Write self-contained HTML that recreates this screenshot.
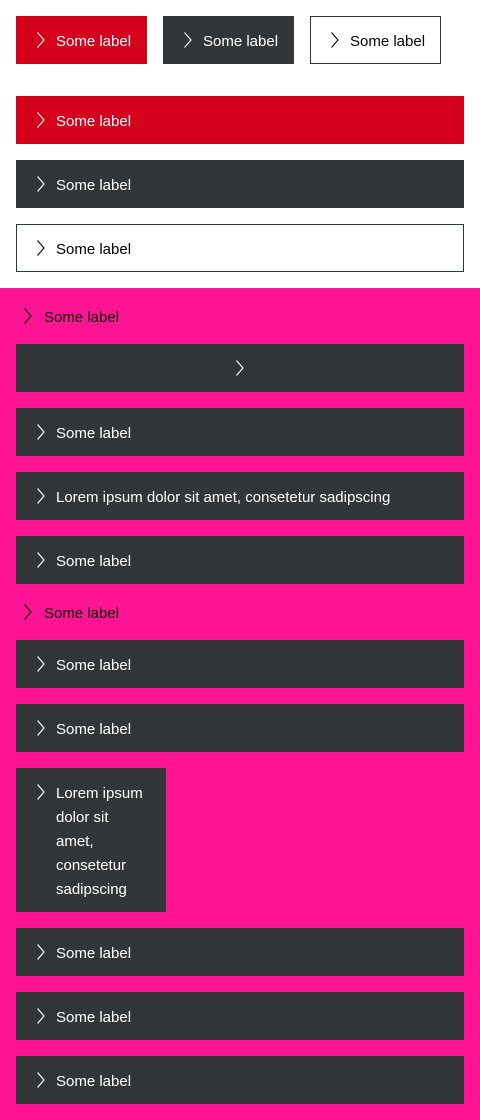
<!DOCTYPE html>
<html><head><style>
*{margin:0;padding:0;box-sizing:border-box}
body{width:480px;height:1120px;background:#fff;position:relative;font-family:"Liberation Sans",sans-serif;font-size:15px;overflow:hidden}
.b{position:absolute;height:48px;display:flex;align-items:center;padding-left:40px;padding-top:3px;color:#fff;line-height:24px}
.b svg{position:absolute;left:20px;top:16px}
.r{background:#d5001c}.d{background:#323639}.o{background:#fff;border:1px solid #323639;color:#000;padding-left:39px}
.o svg{left:19px;top:15px}
.pink{position:absolute;left:0;top:288px;width:480px;height:832px;background:#ff1493}
.l{position:absolute;left:23px;display:flex;align-items:center;color:#000;height:24px;padding-top:3px}
.l svg{margin-right:5px;margin-top:-3px}
</style></head><body>
<svg width="0" height="0" style="position:absolute"><defs><symbol id="c" viewBox="0 0 16 16"><path d="M1.5 0.5L8 8L1.5 15.5" fill="none" stroke="currentColor" stroke-width="1.1"/></symbol></defs></svg>
<div class="b r" style="left:16px;top:16px;width:131px"><svg width="16" height="16"><use href="#c"/></svg>Some label</div>
<div class="b d" style="left:163px;top:16px;width:131px"><svg width="16" height="16"><use href="#c"/></svg>Some label</div>
<div class="b o" style="left:310px;top:16px;width:131px"><svg width="16" height="16"><use href="#c"/></svg>Some label</div>
<div class="b r" style="left:16px;top:96px;width:448px"><svg width="16" height="16"><use href="#c"/></svg>Some label</div>
<div class="b d" style="left:16px;top:160px;width:448px"><svg width="16" height="16"><use href="#c"/></svg>Some label</div>
<div class="b o" style="left:16px;top:224px;width:448px"><svg width="16" height="16"><use href="#c"/></svg>Some label</div>
<div class="pink"></div>
<div class="l" style="top:304px"><svg width="16" height="16"><use href="#c"/></svg>Some label</div>
<div class="b d" style="left:16px;top:344px;width:448px"><svg width="16" height="16" style="left:219px"><use href="#c"/></svg></div>
<div class="b d" style="left:16px;top:408px;width:448px"><svg width="16" height="16"><use href="#c"/></svg>Some label</div>
<div class="b d" style="left:16px;top:472px;width:448px"><svg width="16" height="16"><use href="#c"/></svg>Lorem ipsum dolor sit amet, consetetur sadipscing</div>
<div class="b d" style="left:16px;top:536px;width:448px"><svg width="16" height="16"><use href="#c"/></svg>Some label</div>
<div class="l" style="top:600px"><svg width="16" height="16"><use href="#c"/></svg>Some label</div>
<div class="b d" style="left:16px;top:640px;width:448px"><svg width="16" height="16"><use href="#c"/></svg>Some label</div>
<div class="b d" style="left:16px;top:704px;width:448px"><svg width="16" height="16"><use href="#c"/></svg>Some label</div>
<div class="b d" style="left:16px;top:768px;width:150px;height:144px;align-items:flex-start;padding-top:14px"><svg width="16" height="16"><use href="#c"/></svg>Lorem ipsum<br>dolor sit<br>amet,<br>consetetur<br>sadipscing</div>
<div class="b d" style="left:16px;top:928px;width:448px"><svg width="16" height="16"><use href="#c"/></svg>Some label</div>
<div class="b d" style="left:16px;top:992px;width:448px"><svg width="16" height="16"><use href="#c"/></svg>Some label</div>
<div class="b d" style="left:16px;top:1056px;width:448px"><svg width="16" height="16"><use href="#c"/></svg>Some label</div>
</body></html>
